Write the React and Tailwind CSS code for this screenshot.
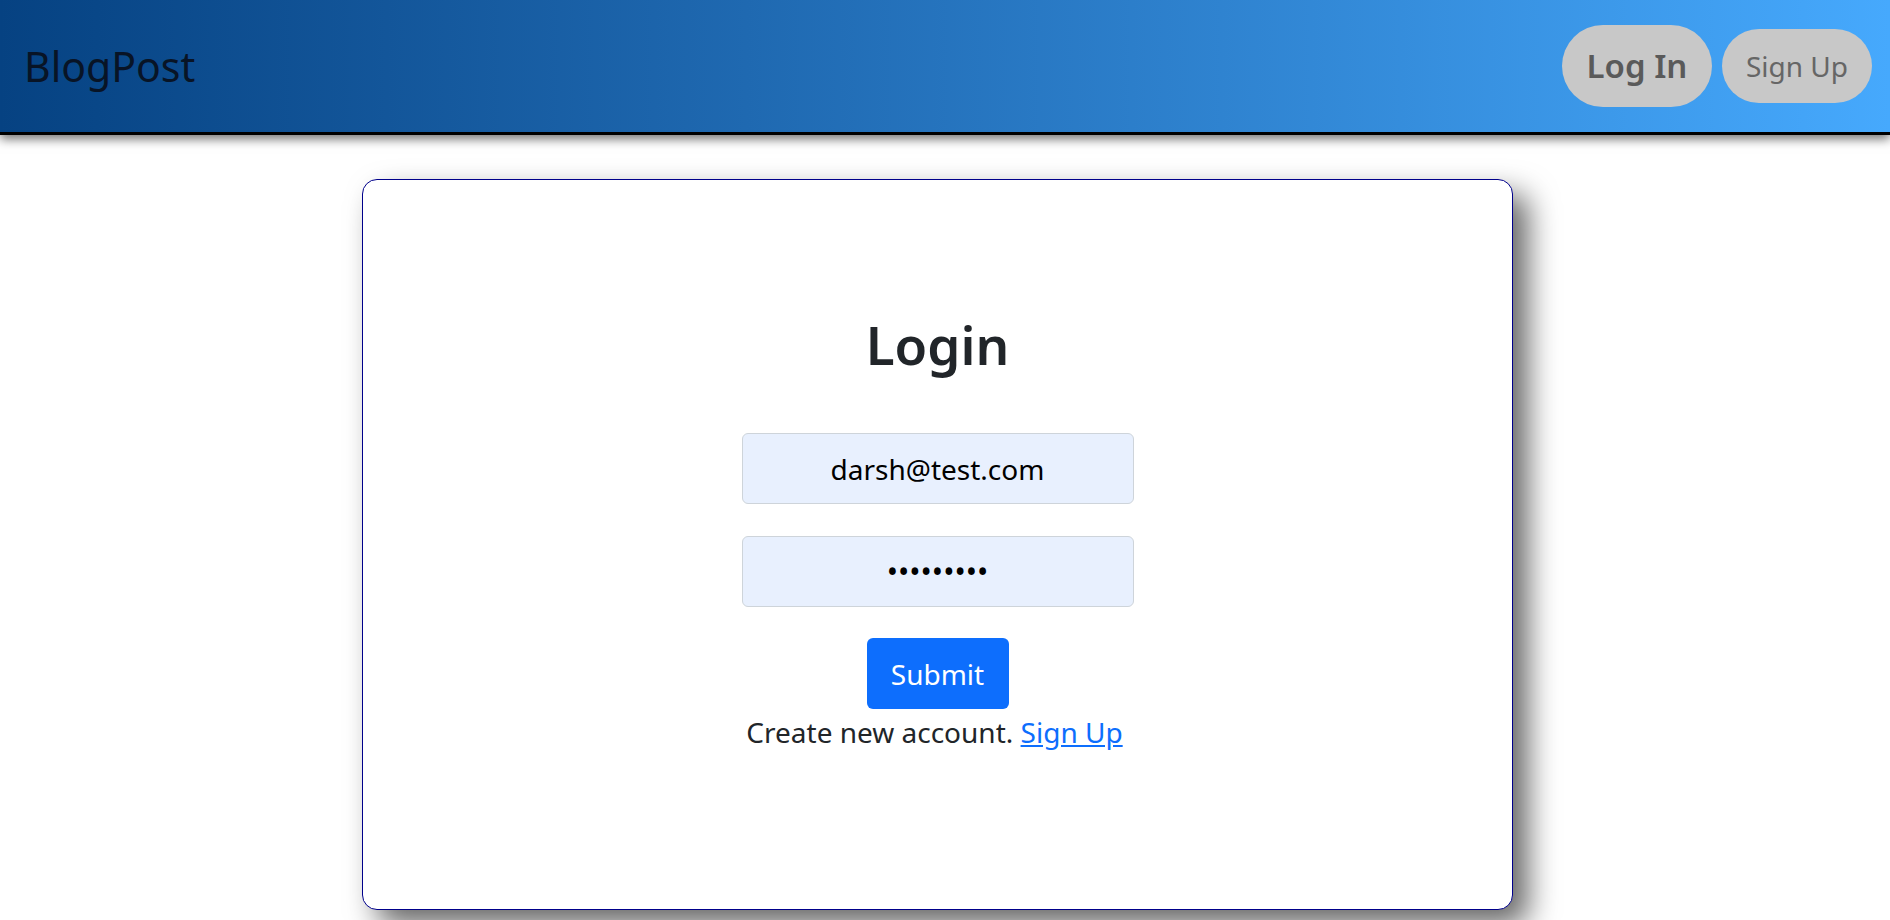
export default function App() {
  const font = { fontFamily: '"Noto Sans", "Open Sans", sans-serif' };

  return (
    <div className="min-h-screen bg-white" style={font}>
      {/* Top bar */}
      <header className="h-[135px] flex items-center justify-between pl-[24px] pr-[18px] border-b-[3px] border-black bg-gradient-to-r from-[#064282] to-[#46a9fd] shadow-[0_4px_10px_rgba(0,0,0,0.55)]">
        <span className="text-[41px] text-[#081426] leading-none">BlogPost</span>
        <div className="flex items-center gap-[10px]">
          <button className="w-[150px] h-[82px] rounded-full bg-[#c8c8c8] text-[#5a5a5a] text-[33px] font-semibold">
            Log In
          </button>
          <button className="w-[150px] h-[74px] rounded-full bg-[#c8c8c8] text-[#666666] text-[28px]">
            Sign Up
          </button>
        </div>
      </header>

      {/* Login card */}
      <div className="ml-[362px] mt-[44px] w-[1151px] h-[731px] rounded-[15px] border border-[#00008b] bg-white shadow-[15px_15px_30px_rgba(0,0,0,0.6)] flex flex-col items-center pt-[131px]">
        <h1 className="text-[53px] leading-[67px] font-semibold text-[#212529]">Login</h1>

        <input
          readOnly
          value="darsh@test.com"
          className="mt-[55px] w-[392px] h-[71px] rounded-[6px] border border-[#ced4da] bg-[#e8f0fe] text-center text-[28px] text-black outline-none"
        />
        <input
          readOnly
          type="password"
          value="password1"
          className="mt-[32px] w-[392px] h-[71px] rounded-[6px] border border-[#ced4da] bg-[#e8f0fe] text-center text-[30px] text-black outline-none"
        />

        <button className="mt-[31px] w-[142px] h-[71px] rounded-[6px] bg-[#0d6efd] text-white text-[28px]">
          Submit
        </button>
        <p className="mt-[3px] mr-[6px] text-[28px] leading-[40px] text-[#212529]">
          Create new account.{' '}
          <a href="#" className="text-[#0d6efd] underline">
            Sign Up
          </a>
        </p>
      </div>
    </div>
  );
}
